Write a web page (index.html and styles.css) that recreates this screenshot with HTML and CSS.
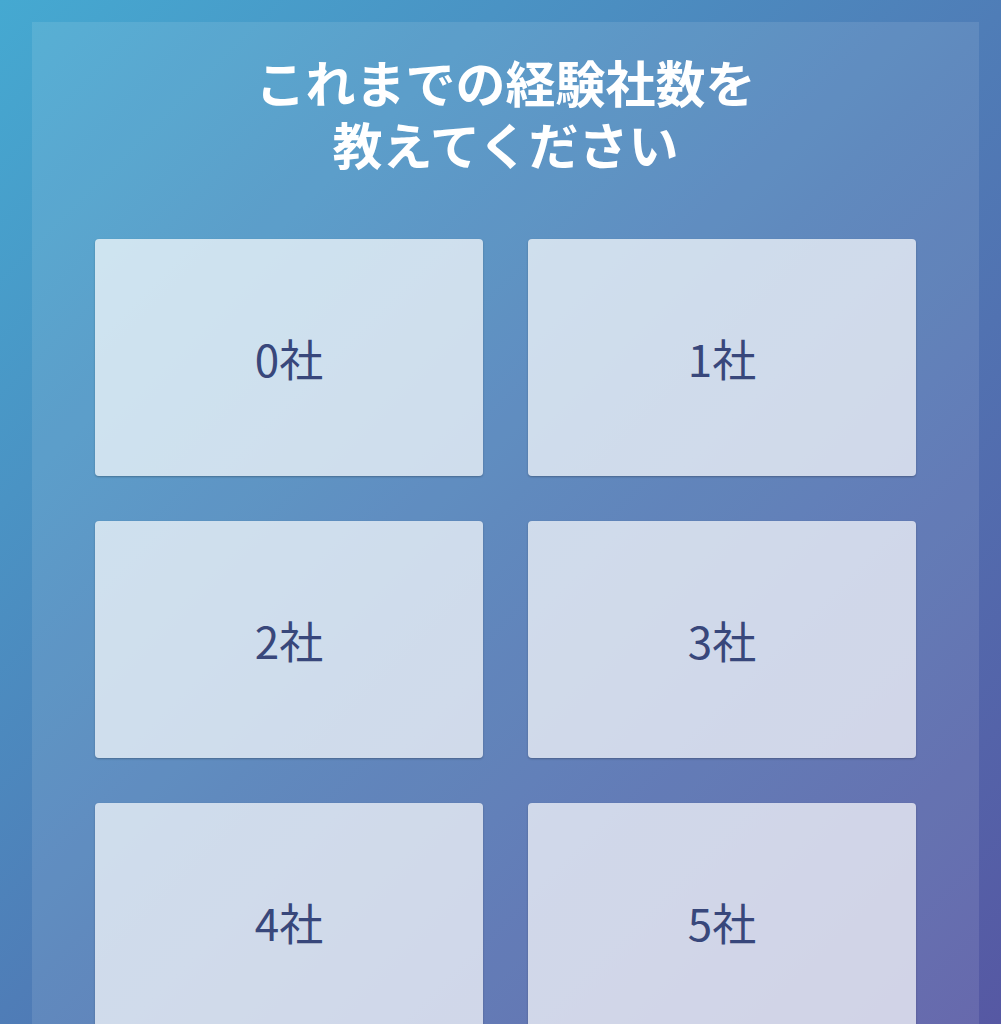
FILE: index.html
```html
<!DOCTYPE html>
<html lang="ja">
<head>
  <meta charset="UTF-8" />
  <meta name="viewport" content="width=device-width, initial-scale=1.0" />
  <title>経験社数</title>
  <link rel="stylesheet" href="styles.css">
</head>
<body>
  <div class="panel">
    <h1 class="question">これまでの経験社数を<br>教えてください</h1>

    <div class="choices">
      <button class="choice">0社</button>
      <button class="choice">1社</button>
      <button class="choice">2社</button>
      <button class="choice">3社</button>
      <button class="choice">4社</button>
      <button class="choice">5社</button>
    </div>
  </div>
</body>
</html>
```

FILE: styles.css
```css
html, body {
  margin: 0;
  padding: 0;
  height: 100%;
  overflow: hidden;
}

body {
  background: linear-gradient(135deg, #45a9d1 0%, #4f7db7 50%, #5658a3 100%);
  font-family: "Noto Sans CJK JP", "Noto Sans", sans-serif;
  padding: 22px 22px 0 32px;
  box-sizing: border-box;
}

.panel {
  background-color: rgba(255, 255, 255, 0.1);
  min-height: 100%;
  padding: 28px 63px 40px;
  box-sizing: border-box;
}

.question {
  margin: 0 0 65px;
  color: white;
  font-size: 50px;
  font-weight: bold;
  line-height: 62px;
  text-align: center;
}

.choices {
  display: grid;
  grid-template-columns: 1fr 1fr;
  gap: 45px;
}

.choice {
  height: 237px;
  border: none;
  border-radius: 4px;
  background-color: rgba(255, 255, 255, 0.7);
  box-shadow: 0 1px 2px rgba(0, 0, 0, 0.25);
  color: #38477b;
  font-family: inherit;
  font-size: 44px;
  cursor: pointer;
}
```
